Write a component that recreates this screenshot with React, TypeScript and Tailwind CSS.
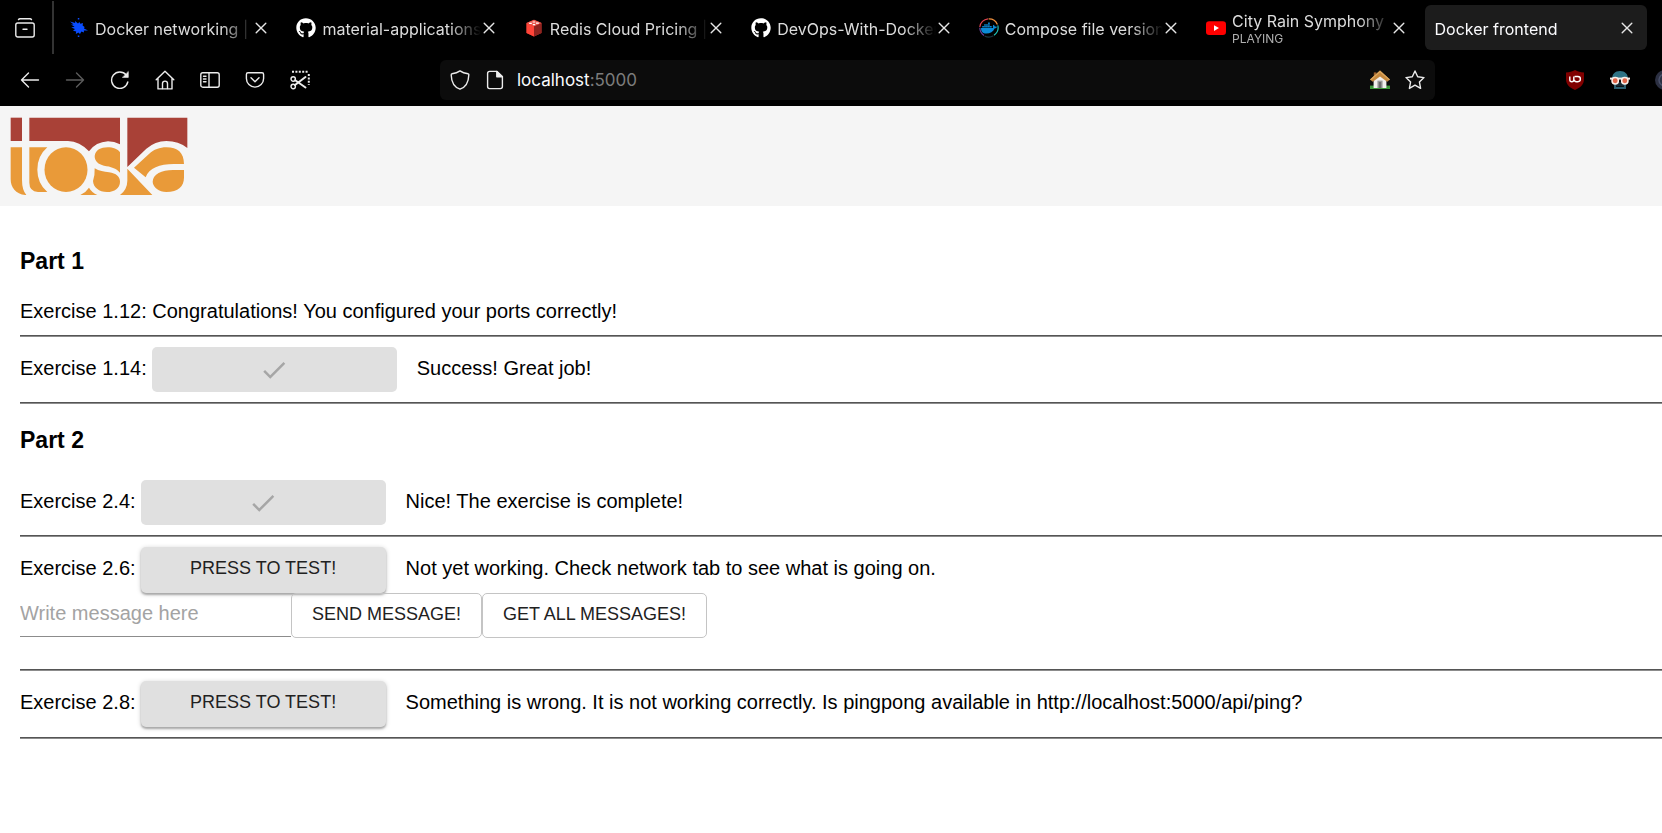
import type { ReactNode } from "react";
import { FaDocker, FaGithub } from "react-icons/fa";

function Stroke({ children, size = 20 }: { children: ReactNode; size?: number }) {
  return (
    <svg
      width={size}
      height={size}
      viewBox="0 0 20 20"
      fill="none"
      stroke="currentColor"
      strokeWidth="1.4"
      strokeLinecap="round"
      strokeLinejoin="round"
      aria-hidden="true"
    >
      {children}
    </svg>
  );
}

function CloseIcon() {
  return (
    <svg width="12" height="12" viewBox="0 0 12 12" fill="none" stroke="currentColor" strokeWidth="1.4" strokeLinecap="round" aria-hidden="true">
      <path d="M1.2 1.2l9.6 9.6M10.8 1.2l-9.6 9.6" />
    </svg>
  );
}

function FishIcon() {
  return (
    <svg width="20" height="20" viewBox="0 0 20 20" fill="#0a4dff" aria-hidden="true">
      <path d="M1 3.600L6.200 5 6 3l3 2.400L10.400 4l1 1.800L14 5l-.4 2.400L15.600 9l-.6 1.400 4 2-4.200 .2.200 1.800-2.600-.8L11 16l-1.600-1.400L6.800 16l.4-2.600-3.200-.6 2-1.800-3.800-1.400L5.600 8.800 2 6.600l2.600 0z" />
      <path d="M8.800 0h1.500v1.600H8.800zM8.800 17.400h1.500V19H8.800z" />
    </svg>
  );
}

function RedisIcon() {
  return (
    <svg width="20" height="20" viewBox="0 0 20 20" aria-hidden="true">
      <path d="M2.5 5L10 1.8 17.5 5v10L10 18.5 2.5 15z" fill="#c6302b" />
      <path d="M2.5 5L10 8.3v10.2L2.5 15z" fill="#ff4438" />
      <path d="M17.5 5L10 8.3v10.2l7.5-3.5z" fill="#8f2420" />
      <path d="M2.5 5L10 1.8 17.5 5 10 8.3z" fill="#e8584e" />
      <path d="M8.6 3.4h2.6v1.2H8.6zM5.2 4.8h2.6V6H5.2zM12 4.6h2.8v1.2H12zM8.8 6h2.4v1.2H8.8z" fill="#fff" />
    </svg>
  );
}

function DockerRingIcon() {
  return (
    <span className="grid size-5 place-items-center">
      <svg className="col-start-1 row-start-1" width="20" height="20" viewBox="0 0 20 20" fill="none" strokeWidth="1.2" aria-hidden="true">
        <path d="M.8 9A9.2 9.2 0 0 1 9 .8" stroke="#e0444f" />
        <path d="M9.6 .8A9.2 9.2 0 0 1 18.4 6.4" stroke="#f2913d" />
        <path d="M18.8 7.4A9.2 9.2 0 0 1 15 17.2" stroke="#20c2b8" />
        <path d="M14.4 17.8A9.2 9.2 0 0 1 5.6 18" stroke="#1c3440" />
        <path d="M5 17.4A9.2 9.2 0 0 1 .8 9.8" stroke="#6a3f9c" />
      </svg>
      <FaDocker className="col-start-1 row-start-1 text-[#0b8ad6]" size={16} aria-hidden="true" />
    </span>
  );
}

function YoutubeIcon() {
  return (
    <svg width="20" height="20" viewBox="0 0 20 20" aria-hidden="true">
      <rect x="0" y="3.2" width="20" height="13.8" rx="3.2" fill="#f00" />
      <path d="M8 7.2v5.8l5-2.9z" fill="#fff" />
    </svg>
  );
}

function HouseIcon() {
  return (
    <svg width="20" height="20" viewBox="0 0 20 20" aria-hidden="true">
      <path d="M0 15.6h20V19H0z" fill="#3f9a3c" />
      <path d="M3.600 9.500L10 4.500l6.400 5V18H3.600z" fill="#f1efed" />
      <path d="M3.800 2.400h2.600v4H3.800z" fill="#9a5f2c" />
      <path d="M10 .6L0 9.400l2.800 2.400L10 6.600l7.200 5.200L20 9.400z" fill="#c4883f" />
      <path d="M10 .6L0 9.400l1 .8L10 2.600l9 7.600 1-.8z" fill="#dca65c" />
      <path d="M7.400 10.600h5.200V18H7.400z" fill="#9a9a9a" />
      <path d="M8.800 12h2.400v6H8.800z" fill="#6b6b6b" />
    </svg>
  );
}

function ShieldBlockIcon() {
  return (
    <svg width="20" height="20" viewBox="0 0 20 20" aria-hidden="true">
      <path d="M10 0c2.6 1.6 5.6 2.4 9 2.5V9c0 5.4-3.6 8.8-9 11C4.600 17.800 1 14.400 1 9V2.500C4.400 2.400 7.400 1.600 10 0z" fill="#800000" />
      <path d="M4.800 6.500v3.300a2 2 0 0 0 4 0V6.500M9.600 6.500h3.200a2.600 2.600 0 0 1 0 5.200h-1.400a2 2 0 0 1-2-2" fill="none" stroke="#fff" strokeWidth="1.400" />
    </svg>
  );
}

function SpyIcon() {
  return (
    <svg width="20" height="20" viewBox="0 0 20 20" aria-hidden="true">
      <path d="M2 9C2 4 5 1 10 1s8 3 8 8z" fill="#2f7385" />
      <path d="M4 13h2v6H4zM14 13h2v6h-2zM6 17h8v2H6z" fill="#2b5e70" />
      <path d="M6 12h8v4.500H6z" fill="#182a35" />
      <path d="M0 7.600h20v2H0z" fill="#f5ece6" />
      <circle cx="5.200" cy="10.800" r="3.200" fill="#e2664a" stroke="#f8efe9" strokeWidth="1.500" />
      <circle cx="14.800" cy="10.800" r="3.200" fill="#e2664a" stroke="#f8efe9" strokeWidth="1.500" />
    </svg>
  );
}

function ToskaLogo() {
  return (
    <svg width="178" height="78" viewBox="31 51 534 234" role="img" aria-label="toska">
      <g fill="#a94137">
        <path d="M33 53H67V123H33z" />
        <path d="M89 53H361V133Q344 124 325 124Q288 126 268 154Q240 124 205 123H89z" />
        <path d="M383 53H563V144Q537 123 500 123Q466 124 440 146L383 201z" />
      </g>
      <g fill="#e99a39">
        <path d="M33 142H67V240Q67 270 80 285H77C48 283 33 262 33 238z" />
        <path d="M89 142H143Q113 168 113 209T143 276H115Q89 274 89 248z" />
        <ellipse cx="199" cy="209" rx="64.500" ry="67" />
        <path d="M242 285Q258 278 268 263Q277 278 293 285z" />
        <path d="M285 168C288 150 303 142 324 142C340 142 354 147 361 157V218C350 204 333 200 313 197C296 193 285 184 285 168z" />
        <path d="M285 205C298 213 313 215 328 217C350 220 361 230 361 245C361 264 345 276 322 276C298 276 281 262 280 243Q286 225 285 205z" />
        <path d="M383 206L458 285H361Q383 268 383 242z" />
        <path d="M403 203L447 163C463 148 480 142 500 142C534 142 553 158 553 192H522C480 192 448 204 438 232z" />
        <path d="M553 210V232C553 260 536 276 500 276C478 276 460 262 459 246C459 222 486 210 520 210z" />
      </g>
    </svg>
  );
}

type TabInfo = { title: string; icon?: ReactNode; status?: string; active?: boolean };

const tabs: TabInfo[] = [
  { title: "Docker networking | D", icon: <FishIcon /> },
  { title: "material-applications", icon: <FaGithub size={20} color="#fff" aria-hidden="true" /> },
  { title: "Redis Cloud Pricing | R", icon: <RedisIcon /> },
  { title: "DevOps-With-Docker", icon: <FaGithub size={20} color="#fff" aria-hidden="true" /> },
  { title: "Compose file version", icon: <DockerRingIcon /> },
  { title: "City Rain Symphony 🎵", icon: <YoutubeIcon />, status: "PLAYING" },
  { title: "Docker frontend", active: true },
];

function Tab({ title, icon, status, active }: TabInfo) {
  return (
    <div
      className={
        active
          ? "flex h-[45px] min-w-0 flex-1 items-center rounded-md bg-[#1c1c1c] pr-3 pl-2.5 text-[#fbfbfe]"
          : "flex h-[45px] min-w-0 flex-1 items-center pr-3 pl-[9px] text-[#dcdcdc]"
      }
    >
      {icon && <span className="mr-1.5 shrink-0">{icon}</span>}
      <span className="min-w-0 flex-1 overflow-hidden pt-0.5 whitespace-nowrap [mask-image:linear-gradient(to_right,black_calc(100%_-_32px),transparent)]">
        <span className={status ? "block text-base leading-5" : "block text-base leading-6"}>{title}</span>
        {status && <span className="block text-xs leading-4 text-[#b0b0b0]">{status}</span>}
      </span>
      <button type="button" aria-label={`Close ${title}`} className="grid h-5 w-4 shrink-0 place-items-center text-[#e6e6e6]">
        <CloseIcon />
      </button>
    </div>
  );
}

function ToolButton({ label, dim, children }: { label: string; dim?: boolean; children: ReactNode }) {
  return (
    <button
      type="button"
      aria-label={label}
      className={
        dim
          ? "grid h-10 w-[45px] shrink-0 place-items-center text-[#5c5c5c]"
          : "grid h-10 w-[45px] shrink-0 place-items-center text-[#ececec]"
      }
    >
      {children}
    </button>
  );
}

function BrowserChrome() {
  return (
    <header className="bg-black font-[Inter,sans-serif]">
      <div className="flex h-[54px] items-center pt-px pr-[15px]">
        <button type="button" aria-label="Recent browsing" className="grid h-full w-[54px] shrink-0 place-items-center border-r-2 border-[#333] pr-0.5 text-[#ececec]">
          <Stroke>
            <path d="M3.500 1.600Q4 .8 5 .8h10q1 0 1.500 .8" />
            <rect x=".8" y="5" width="18.400" height="14" rx="2" />
            <path d="M8 11.200h4" />
          </Stroke>
        </button>
        <div className="flex min-w-0 flex-1 gap-1.5 pl-1.5">
          {tabs.map((tab) => (
            <Tab key={tab.title} {...tab} />
          ))}
        </div>
      </div>
      <div className="flex h-[52px] items-center overflow-hidden">
        <nav aria-label="Browser" className="flex w-[440px] shrink-0 pl-[7px]">
          <ToolButton label="Back">
            <Stroke><path d="M18.500 10H1.500M8.500 3l-7 7 7 7" /></Stroke>
          </ToolButton>
          <ToolButton label="Forward" dim>
            <Stroke><path d="M1.500 10h17M11.500 3l7 7-7 7" /></Stroke>
          </ToolButton>
          <ToolButton label="Reload">
            <Stroke>
              <path d="M17.800 12A8.200 8.200 0 1 1 16.200 5" />
              <path d="M18.300 1.800v5.600h-5.600z" fill="currentColor" strokeWidth=".6" />
            </Stroke>
          </ToolButton>
          <ToolButton label="Home">
            <Stroke>
              <path d="M1.200 9.800L10 1.200l8.800 8.600M3 8.400V18.900h14V8.400" />
              <path d="M7.500 18.600v-5a2.500 2.500 0 0 1 5 0v5" />
            </Stroke>
          </ToolButton>
          <ToolButton label="Sidebar">
            <Stroke>
              <rect x=".8" y="2.800" width="18.400" height="14.400" rx="2" />
              <path d="M9 3v14M3.500 6.200H6M3.500 9H6M3.500 11.800H6" />
            </Stroke>
          </ToolButton>
          <ToolButton label="Save to Pocket">
            <Stroke>
              <path d="M3 2.800h14q1.600 0 1.600 1.600V8.500a8.600 8.600 0 0 1-17.200 0V4.400Q1.400 2.800 3 2.800z" />
              <path d="M6 7.800l4 4 4-4" />
            </Stroke>
          </ToolButton>
          <ToolButton label="Take screenshot">
            <Stroke>
              <path d="M2 1.800h16.500M18.800 4v11" strokeWidth="2" strokeLinecap="butt" strokeDasharray="2 1.400" />
              <circle cx="3.200" cy="9" r="2.200" />
              <circle cx="3.200" cy="16.500" r="2.200" />
              <path d="M5.200 10.200L15.500 17.500M5 15l10.500-8" strokeWidth="2" />
            </Stroke>
          </ToolButton>
        </nav>
        <div className="flex h-10 min-w-0 flex-1 items-center rounded-md bg-[#0c0c0c] px-2.5">
          <span className="mr-[15px] text-[#ececec]">
            <Stroke>
              <path d="M10 .9c2 1.500 4.600 2.500 8 2.800.6 0 .9 .5 .8 1.200C18.600 12 16 17 10 19.200 4 17 1.400 12 1.200 4.900c0-.7 .3-1.200 .8-1.200C5.400 3.400 8 2.400 10 .9z" />
            </Stroke>
          </span>
          <span className="mr-3 text-[#ececec]">
            <Stroke>
              <path d="M12 1.400H4.600q-2 0-2 2v13.200q0 2 2 2h10.800q2 0 2-2V6.800z" />
              <path d="M11.800 1.400v5.400h5.600z" fill="currentColor" />
            </Stroke>
          </span>
          <div className="min-w-0 flex-1 text-[17px] leading-6 text-[#fbfbfe]">
            localhost<span className="text-[#7c7c7c]">:5000</span>
          </div>
          <HouseIcon />
          <button type="button" aria-label="Bookmark this page" className="ml-[15px] text-[#ececec]">
            <Stroke>
              <path d="M10 1l2.700 5.800 6.300 .8-4.600 4.300 1.200 6.500L10 15.200l-5.600 3.200 1.200-6.500L1 7.600l6.300-.8z" />
            </Stroke>
          </button>
        </div>
        <div className="flex w-[227px] shrink-0 overflow-hidden pl-[117px]">
          <ToolButton label="Content blocker"><ShieldBlockIcon /></ToolButton>
          <ToolButton label="Privacy extension"><SpyIcon /></ToolButton>
          <ToolButton label="Account">
            <svg width="20" height="20" viewBox="0 0 20 20" aria-hidden="true">
              <circle cx="10" cy="10" r="10" fill="#2c3042" />
              <circle cx="10" cy="10" r="6" fill="none" stroke="#49506a" strokeWidth="1.500" />
            </svg>
          </ToolButton>
        </div>
      </div>
    </header>
  );
}

function Rule() {
  return <hr className="h-0.5 border-0 border-t border-b border-t-[#555] border-b-[#8c8c8c]" />;
}

function Exercise({ name, message, done }: { name: string; message: string; done?: boolean }) {
  return (
    <div className="flex items-center">
      <span className="mr-[5px] pb-1">{name}</span>
      {done ? (
        <button type="button" disabled aria-label={`${name} done`} className="grid h-[45px] w-[245px] shrink-0 place-items-center rounded-[5px] bg-[#e0e0e0] text-[#a6a6a6]">
          <svg width="30" height="30" viewBox="0 0 24 24" fill="currentColor" aria-hidden="true">
            <path d="M9 16.170L4.830 12l-1.420 1.410L9 19 21 7l-1.410-1.410z" />
          </svg>
        </button>
      ) : (
        <button type="button" className="h-[46px] w-[245px] shrink-0 rounded-[5px] bg-[#e0e0e0] pb-1 text-lg text-[#212121] shadow-[0_2px_2px_rgba(0,0,0,0.25),0_1px_5px_rgba(0,0,0,0.2)]">
          PRESS TO TEST!
        </button>
      )}
      <span className="ml-5 pb-1">{message}</span>
    </div>
  );
}

export default function App() {
  return (
    <div className="min-h-screen bg-white text-black">
      <BrowserChrome />
      <div className="font-['Liberation_Sans',Arial,sans-serif] text-xl leading-6">
        <div className="h-[100px] bg-[#f5f5f5] pt-[11px] pl-2.5">
          <ToskaLogo />
        </div>
        <main className="pt-10 pl-5">
          <h2 className="text-[23px] leading-[30px] font-bold">Part 1</h2>
          <p className="mt-[23px] mb-3">Exercise 1.12: Congratulations! You configured your ports correctly!</p>
          <Rule />
          <div className="py-2.5">
            <Exercise name="Exercise 1.14:" message="Success! Great job!" done />
          </div>
          <Rule />
          <h2 className="mt-[21px] mb-[15px] text-[23px] leading-[30px] font-bold">Part 2</h2>
          <div className="py-2.5">
            <Exercise name="Exercise 2.4:" message="Nice! The exercise is complete!" done />
          </div>
          <Rule />
          <div className="pt-2.5 pb-[31px]">
            <Exercise name="Exercise 2.6:" message="Not yet working. Check network tab to see what is going on." />
            <form className="flex" onSubmit={(e) => e.preventDefault()}>
              <input
                type="text"
                aria-label="Message"
                placeholder="Write message here"
                className="mb-px h-11 w-[271px] border-b border-[#8c8c8c] pb-0.5 outline-none placeholder:text-[#a3a3a3]"
              />
              <button type="submit" className="h-[45px] rounded-[5px] border border-[#c4c4c4] px-5 pb-1 text-lg text-[#212121]">
                SEND MESSAGE!
              </button>
              <button type="button" className="h-[45px] rounded-[5px] border border-[#c4c4c4] px-5 pb-1 text-lg text-[#212121]">
                GET ALL MESSAGES!
              </button>
            </form>
          </div>
          <Rule />
          <div className="py-2.5">
            <Exercise name="Exercise 2.8:" message="Something is wrong. It is not working correctly. Is pingpong available in http://localhost:5000/api/ping?" />
          </div>
          <Rule />
        </main>
      </div>
    </div>
  );
}
